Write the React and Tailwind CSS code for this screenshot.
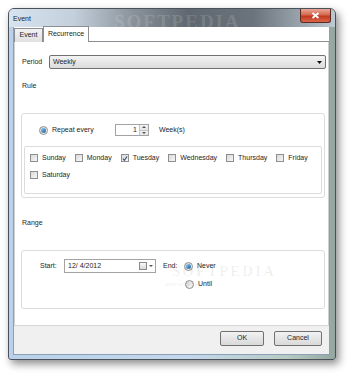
import React from 'react'

const font = "font-['Liberation_Sans',Arial,sans-serif]"

const CheckBox = ({ checked }) => (
  <span className="w-[8px] h-[8px] border border-[#8f8f8f] bg-gradient-to-br from-[#d9d9d9] to-[#f7f7f7] flex items-center justify-center shrink-0">
    {checked && (
      <svg width="7" height="7" viewBox="0 0 7 7">
        <path d="M1 3.6 L2.8 5.6 L6 1" fill="none" stroke="#3a4f7a" strokeWidth="1.2" />
      </svg>
    )}
  </span>
)

const Radio = ({ checked }) => (
  <span className="w-[9px] h-[9px] rounded-full border border-[#8e8f8f] bg-gradient-to-br from-[#d6d6d6] to-[#fbfbfb] flex items-center justify-center shrink-0">
    {checked && <span className="w-[5px] h-[5px] rounded-full bg-gradient-to-br from-[#8ccdf5] to-[#1b5c9c]" />}
  </span>
)

const days = [
  { name: 'Sunday' },
  { name: 'Monday' },
  { name: 'Tuesday', checked: true },
  { name: 'Wednesday' },
  { name: 'Thursday' },
  { name: 'Friday' },
  { name: 'Saturday' },
]

export default function App() {
  return (
    <div className={`w-[350px] h-[374px] bg-white overflow-hidden pt-[8px] pl-[8px] text-[7px] text-[#1e1e1e] ${font}`}>
      {/* window */}
      <div className="w-[328px] h-[352px] flex flex-col rounded-t-[6px] rounded-b-[3px] border border-[#4b5159] bg-[linear-gradient(90deg,#b9d1ea_0%,#c4d8ec_55%,#b7cbc4_85%,#93a7a0_100%)] shadow-[3px_4px_8px_rgba(0,0,0,0.45)]">
        {/* title bar */}
        <div className="h-[18px] relative flex items-start rounded-t-[5px] bg-[linear-gradient(90deg,#d7e3ef_0%,#c3cfdb_20%,#8a939c_38%,#5f6870_55%,#6b747c_75%,#a3adb5_92%,#bcc8d2_100%)]">
          <span className="absolute left-[4px] top-[5px] text-[7px] text-[#1e1e1e]">Event</span>
          <span className="absolute left-[105px] top-[-1px] text-[19px] font-bold tracking-[2px] text-white/15 font-['Liberation_Serif',serif]">SOFTPEDIA</span>
          <div className="ml-auto mr-[4px] w-[31px] h-[14px] rounded-b-[3px] border border-t-0 border-[#5b2a22] bg-[linear-gradient(180deg,#e9a898_0%,#d4694f_45%,#c0381f_55%,#d9674a_100%)] flex items-center justify-center">
            <svg width="9" height="7" viewBox="0 0 9 7">
              <path d="M1.5 1 L7.5 6 M7.5 1 L1.5 6" stroke="white" strokeWidth="1.8" />
            </svg>
          </div>
        </div>

        {/* body */}
        <div className="flex-1 ml-[4px] mr-[5px] mb-[4px] flex flex-col border border-[#8aa0b8] border-t-0 bg-white">
          {/* tabs */}
          <div className="flex items-end h-[16px] mt-[-1px]">
            <div className="h-[14px] w-[29px] border border-b-0 border-[#8c8e94] bg-gradient-to-b from-[#f2f2f2] to-[#e0e0e0] flex items-center justify-center">Event</div>
            <div className="h-[16px] w-[46px] border border-b-0 border-[#8c8e94] bg-white flex items-start justify-center pt-[2px] relative z-10">Recurrence</div>
            <div className="flex-1 h-full border-b border-[#8c8e94]" />
          </div>

          {/* panel */}
          <div className="flex-1 flex flex-col border-l border-r border-[#d0d0d0] bg-white">
            <div className="flex items-center h-[14px] mt-[13px]">
              <span className="ml-[7px] w-[27px]">Period</span>
              <div className="w-[277px] h-[14px] rounded-[2px] border border-[#707070] bg-gradient-to-b from-[#f3f3f3] to-[#dcdcdc] flex items-center px-[3px]">
                <span>Weekly</span>
                <svg className="ml-auto" width="5" height="3" viewBox="0 0 5 3">
                  <path d="M0 0 H5 L2.5 3 Z" fill="#111" />
                </svg>
              </div>
            </div>

            <div className="h-[10px] leading-[10px] mt-[12px] ml-[7px]">Rule</div>

            {/* rule box */}
            <div className="mt-[22px] ml-[6px] mr-[3px] h-[85px] rounded-[3px] border border-[#dcdcdc] flex flex-col">
              <div className="flex items-center h-[12px] mt-[10px] pl-[17px]">
                <Radio checked />
                <span className="ml-[4px] w-[63px]">Repeat every</span>
                <div className="w-[34px] h-[12px] border border-[#a3a3a3] flex items-center">
                  <span className="flex-1 text-right pr-[2px]">1</span>
                  <div className="w-[9px] h-full flex flex-col border-l border-[#c4c4c4]">
                    <div className="flex-1 flex items-center justify-center bg-gradient-to-b from-[#f4f4f4] to-[#e4e4e4] border-b border-[#c4c4c4]">
                      <svg width="4" height="2" viewBox="0 0 4 2"><path d="M0 2 H4 L2 0 Z" fill="#555" /></svg>
                    </div>
                    <div className="flex-1 flex items-center justify-center bg-gradient-to-b from-[#f4f4f4] to-[#e4e4e4]">
                      <svg width="4" height="2" viewBox="0 0 4 2"><path d="M0 0 H4 L2 2 Z" fill="#555" /></svg>
                    </div>
                  </div>
                </div>
                <span className="ml-[10px]">Week(s)</span>
              </div>

              <div className="mt-[10px] mx-[2px] h-[48px] rounded-[2px] border border-[#dcdcdc] flex flex-wrap content-start gap-x-[9px] gap-y-[7px] pt-[6px] px-[5px]">
                {days.map((d) => (
                  <div key={d.name} className="flex items-center h-[10px]">
                    <CheckBox checked={d.checked} />
                    <span className="ml-[4px]">{d.name}</span>
                  </div>
                ))}
              </div>
            </div>

            <div className="h-[10px] leading-[10px] mt-[20px] ml-[7px]">Range</div>

            {/* range box */}
            <div className="mt-[22px] ml-[6px] mr-[3px] h-[59px] rounded-[3px] border border-[#dcdcdc] flex flex-col relative">
              <div className="flex items-center h-[14px] mt-[8px] pl-[18px]">
                <span className="w-[24px]">Start:</span>
                <div className="w-[92px] h-[14px] border border-[#a3a3a3] flex items-center pl-[3px] pr-[2px]">
                  <span>12/ 4/2012</span>
                  <span className="ml-auto w-[8px] h-[8px] border border-[#8a8a8a] bg-gradient-to-b from-[#fafafa] to-[#d8d8d8]" />
                  <svg className="ml-[2px]" width="4" height="2" viewBox="0 0 4 2"><path d="M0 0 H4 L2 2 Z" fill="#555" /></svg>
                </div>
                <span className="ml-[7px] w-[21px]">End:</span>
                <Radio checked />
                <span className="ml-[4px]">Never</span>
              </div>
              <div className="flex items-center h-[10px] mt-[6px] pl-[163px]">
                <Radio />
                <span className="ml-[4px]">Until</span>
              </div>
              <span className="absolute left-[150px] top-[9px] text-[15px] font-bold tracking-[2px] text-black/[0.06] font-['Liberation_Serif',serif]">SOFTPEDIA</span>
              <span className="absolute left-[143px] top-[30px] text-[5px] text-black/10">www.softpedia.com</span>
            </div>
            <div className="flex-1" />
          </div>

          {/* bottom buttons */}
          <div className="h-[29px] border-t border-[#d5d5d5] bg-[#f0f0f0] flex justify-end items-start pt-[5px] pr-[7px] gap-[10px]">
            <button className={`w-[44px] h-[15px] rounded-[2px] border border-[#707070] bg-gradient-to-b from-[#f2f2f2] to-[#d9d9d9] text-[7px] text-[#1e1e1e] flex items-center justify-center ${font}`}>OK</button>
            <button className={`w-[48px] h-[15px] rounded-[2px] border border-[#707070] bg-gradient-to-b from-[#f2f2f2] to-[#d9d9d9] text-[7px] text-[#1e1e1e] flex items-center justify-center ${font}`}>Cancel</button>
          </div>
        </div>
      </div>
    </div>
  )
}
